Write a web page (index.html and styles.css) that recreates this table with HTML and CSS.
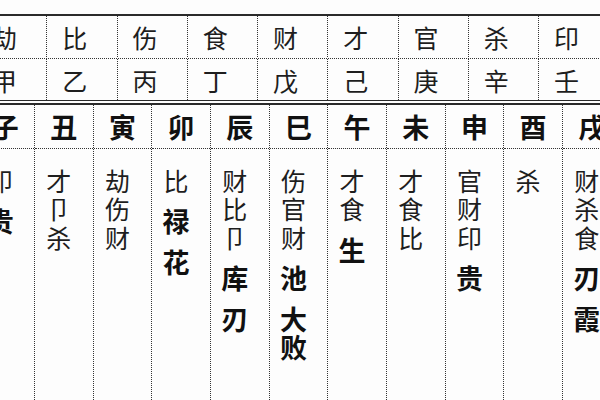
FILE: index.html
```html
<!DOCTYPE html>
<html lang="zh">
<head>
<meta charset="utf-8">
<link rel="stylesheet" href="styles.css">
</head>
<body>
<div class="page">
  <div class="top">
    <div class="trow r1">
      <div class="tc">劫</div><div class="tc">比</div><div class="tc">伤</div><div class="tc">食</div><div class="tc">财</div><div class="tc">才</div><div class="tc">官</div><div class="tc">杀</div><div class="tc">印</div>
    </div>
    <div class="trow r2">
      <div class="tc">甲</div><div class="tc">乙</div><div class="tc">丙</div><div class="tc">丁</div><div class="tc">戊</div><div class="tc">己</div><div class="tc">庚</div><div class="tc">辛</div><div class="tc">壬</div>
    </div>
  </div>
  <div class="bottom">
    <div class="col"><div class="hd">子</div><div class="bd"><span class="n">印</span><span class="b">贵</span></div></div>
    <div class="col"><div class="hd">丑</div><div class="bd"><span class="n">才</span><span class="n">卩</span><span class="n">杀</span></div></div>
    <div class="col"><div class="hd">寅</div><div class="bd"><span class="n">劫</span><span class="n">伤</span><span class="n">财</span></div></div>
    <div class="col"><div class="hd">卯</div><div class="bd"><span class="n">比</span><span class="b">禄</span><span class="b">花</span></div></div>
    <div class="col"><div class="hd">辰</div><div class="bd"><span class="n">财</span><span class="n">比</span><span class="n">卩</span><span class="b">库</span><span class="b">刃</span></div></div>
    <div class="col"><div class="hd">巳</div><div class="bd"><span class="n">伤</span><span class="n">官</span><span class="n">财</span><span class="b">池</span><span class="b">大<br>败</span></div></div>
    <div class="col"><div class="hd">午</div><div class="bd"><span class="n">才</span><span class="n">食</span><span class="b">生</span></div></div>
    <div class="col"><div class="hd">未</div><div class="bd"><span class="n">才</span><span class="n">食</span><span class="n">比</span></div></div>
    <div class="col"><div class="hd">申</div><div class="bd"><span class="n">官</span><span class="n">财</span><span class="n">印</span><span class="b">贵</span></div></div>
    <div class="col"><div class="hd">酉</div><div class="bd"><span class="n">杀</span></div></div>
    <div class="col"><div class="hd">戌</div><div class="bd"><span class="n">财</span><span class="n">杀</span><span class="n">食</span><span class="b">刃</span><span class="b">霞</span></div></div>
  </div>
</div>
</body>
</html>
```
FILE: styles.css
```css
html, body {
  margin: 0;
  padding: 0;
  background: #fdfdfd;
}
body {
  width: 600px;
  height: 400px;
  overflow: hidden;
  font-family: "Noto Sans CJK SC", "Noto Sans CJK TC", sans-serif;
}
.page {
  height: 400px;
  display: flex;
  flex-direction: column;
  align-items: flex-start;
  padding-top: 14px;
  box-sizing: border-box;
  overflow: hidden;
}
.top {
  width: 660px;
  margin-left: -23px;
  border-top: 2px solid #2a2a2a;
  border-bottom: 1.5px solid #2a2a2a;
  flex: 0 0 auto;
}
.trow {
  display: grid;
  grid-template-columns: repeat(9, 70.25px);
}
.r1 {
  height: 41px;
  padding-bottom: 1px;
  border-bottom: 1px dotted #333;
}
.r2 {
  height: 41px;
}
.tc {
  box-sizing: border-box;
  border-right: 1px dotted #333;
  display: flex;
  align-items: center;
  justify-content: center;
  padding-right: 14px;
  font-size: 25px;
  font-weight: 400;
  color: #1e1e1e;
}
.bottom {
  flex: 1 0 auto;
  width: 680px;
  margin-left: -23.7px;
  margin-top: 1.5px;
  border-top: 2px solid #2a2a2a;
  display: flex;
}
.col {
  flex: 0 0 58.67px;
  box-sizing: border-box;
  border-right: 1px dotted #333;
}
.hd {
  height: 43px;
  border-bottom: 1px dotted #333;
  display: flex;
  align-items: center;
  justify-content: center;
  font-size: 27px;
  font-weight: 700;
  color: #111;
}
.bd {
  padding-top: 17px;
  padding-right: 10px;
  display: flex;
  flex-direction: column;
  align-items: center;
  text-align: center;
}
.n {
  font-size: 25px;
  line-height: 28.5px;
  font-weight: 400;
  color: #1e1e1e;
}
.b {
  font-size: 27px;
  line-height: 28px;
  font-weight: 700;
  color: #111;
  margin-top: 13px;
}
```
